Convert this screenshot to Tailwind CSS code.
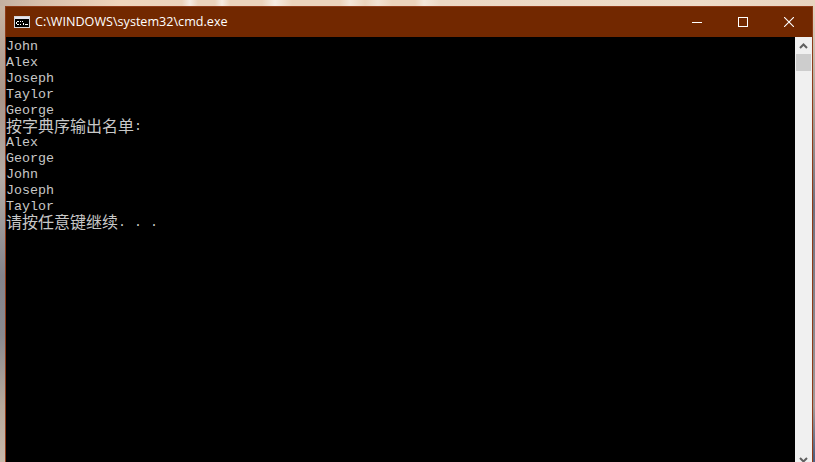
<!DOCTYPE html>
<html lang="zh">
<head>
  <meta charset="UTF-8" />
  <title>cmd.exe</title>
  <script src="https://cdn.jsdelivr.net/npm/@tailwindcss/browser@4"></script>
</head>
<body class="w-[815px] h-[462px] overflow-hidden flex flex-col">
  <!-- wallpaper, top edge -->
  <div class="h-[6px] shrink-0 bg-[linear-gradient(90deg,#c4b0a2_0px,#d8c0ac_40px,#f0d6bc_120px,#ecd4bc_182px,#f6ece2_190px,#ecd4bc_198px,#ecd4bc_215px,#f6ece2_222px,#ecd4bc_230px,#ecd4bc_262px,#f6ece2_275px,#ecd4bc_292px,#ecd4bc_340px,#f4e6d8_350px,#ecd4bc_365px,#f2e2d2_378px,#ecd4bc_392px,#ecd4bc_415px,#f4e6d8_424px,#ecd8c4_440px,#eedcc8_700px,#e8d4c0_815px)]"></div>
  <div class="flex h-[462px] shrink-0">
    <!-- wallpaper, left edge -->
    <div class="w-[5px] shrink-0 bg-[linear-gradient(180deg,#c8b4a4_0px,#a89488_90px,#b4aca6_170px,#84848c_270px,#8a8a90_330px,#b8aa9c_400px,#c8b8aa_456px)]"></div>
    <div class="w-[808px] shrink-0 flex flex-col border-x border-t border-[#8f3a17]">
      <!-- title bar -->
      <div class="h-[30px] shrink-0 bg-[#722800] flex items-center text-white">
        <svg class="ml-[8px] w-[16px] h-[12px]" viewBox="0 0 16 12">
          <rect x="0.5" y="0.5" width="15" height="11" fill="#000" stroke="#d4d4d8" />
          <rect x="1" y="1" width="14" height="2" fill="#e4e4ee" />
          <path d="M3 5h2v1H3zM3 8h2v1H3zM2 6h1v2H2zM6 5h1v1H6zM6 8h1v1H6zM8 5h1v1H8zM9 7h1v2H9zM11 8h3v1h-3z" fill="#fff" />
        </svg>
        <span class="ml-[5px] font-['Open_Sans','Liberation_Sans',sans-serif] text-[12.6px] leading-[16px] text-white">C:\WINDOWS\system32\cmd.exe</span>
        <div class="ml-auto flex items-center h-full">
          <div class="w-[46px] h-full flex items-center justify-center">
            <div class="w-[10px] h-px bg-white"></div>
          </div>
          <div class="w-[46px] h-full flex items-center justify-center">
            <div class="w-[10px] h-[10px] border border-white"></div>
          </div>
          <div class="w-[46px] h-full flex items-center justify-center">
            <svg class="w-[10px] h-[10px]" viewBox="0 0 10 10"><path d="M0 0L10 10M10 0L0 10" stroke="#fff" stroke-width="1.1" fill="none" /></svg>
          </div>
        </div>
      </div>
      <!-- console + scrollbar -->
      <div class="flex-1 flex min-h-0">
        <div class="flex-1 bg-black pt-px text-[#c8c8c8] font-['Liberation_Mono',monospace] text-[13.33px] leading-[18px]">
          <div class="h-[16px]">John</div>
          <div class="h-[16px]">Alex</div>
          <div class="h-[16px]">Joseph</div>
          <div class="h-[16px]">Taylor</div>
          <div class="h-[16px]">George</div>
          <div class="h-[16px] flex"><span class="block h-[16px] text-[16px] leading-[15px] font-['Noto_Sans_CJK_SC',sans-serif]">按字典序输出名单</span><span>:</span></div>
          <div class="h-[16px]">Alex</div>
          <div class="h-[16px]">George</div>
          <div class="h-[16px]">John</div>
          <div class="h-[16px]">Joseph</div>
          <div class="h-[16px]">Taylor</div>
          <div class="h-[16px] flex"><span class="block h-[16px] text-[16px] leading-[15px] font-['Noto_Sans_CJK_SC',sans-serif]">请按任意键继续</span><span class="whitespace-pre">. . .</span></div>
        </div>
        <div class="w-[17px] shrink-0 bg-[#f0f0f0] flex flex-col items-center">
          <div class="h-[17px] w-full flex items-center justify-center">
            <svg class="w-[9px] h-[6px]" viewBox="0 0 9 6"><path d="M1 5L4.5 1.5L8 5" stroke="#606060" stroke-width="2" fill="none" /></svg>
          </div>
          <div class="w-[15px] h-[17px] bg-[#cdcdcd]"></div>
          <div class="mt-auto h-[17px] w-full flex items-center justify-center">
            <svg class="w-[9px] h-[6px]" viewBox="0 0 9 6"><path d="M1 1L4.5 4.5L8 1" stroke="#606060" stroke-width="2" fill="none" /></svg>
          </div>
        </div>
      </div>
    </div>
    <!-- wallpaper, right edge -->
    <div class="w-[2px] shrink-0 bg-[linear-gradient(180deg,#e4d2c0_0px,#a49c92_110px,#6e7080_200px,#88888e_320px,#a09a98_400px,#506080_450px)]"></div>
  </div>
</body>
</html>
